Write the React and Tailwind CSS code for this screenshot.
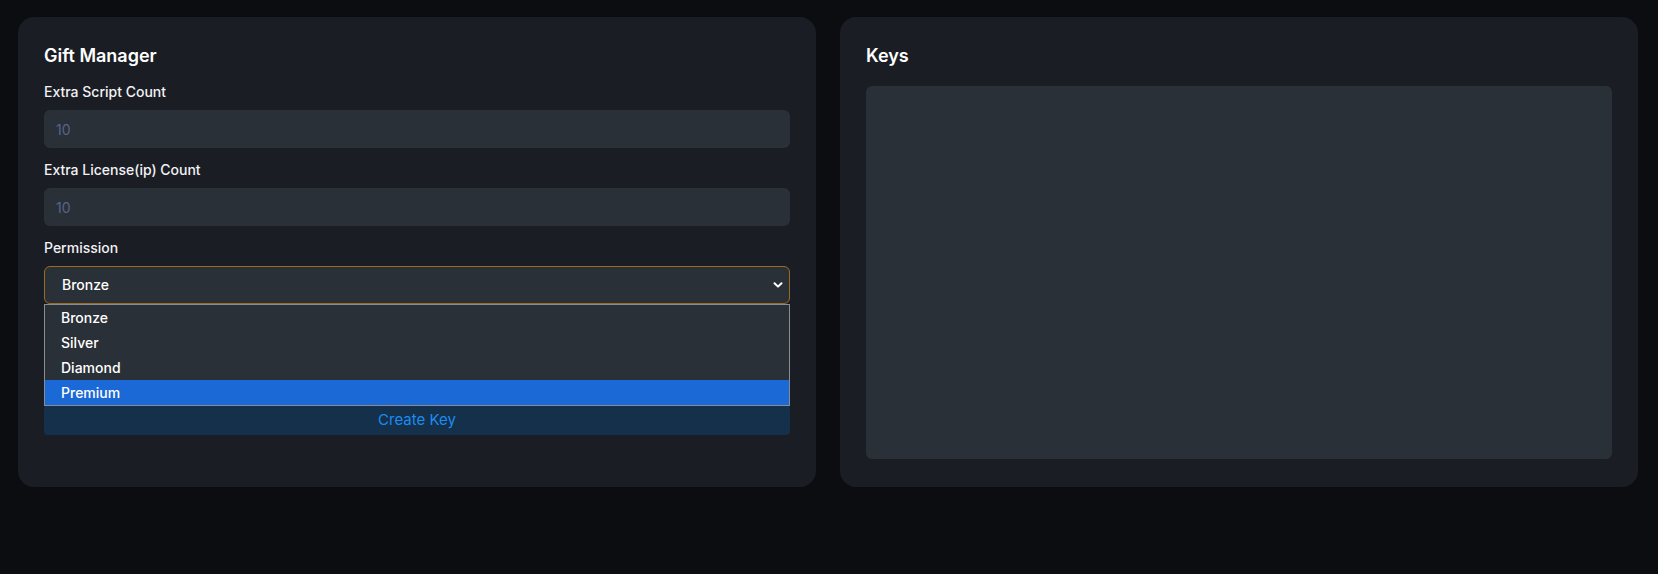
import { useState } from "react";

const permissions = ["Bronze", "Silver", "Diamond", "Premium"];

const Field = ({ label, value }) => (
  <div className="mt-3">
    <label className="block mb-2 text-sm leading-5 font-medium text-[#f1f2f4]">
      {label}
    </label>
    <input
      type="text"
      defaultValue={value}
      className="w-full h-[38px] px-3 rounded-md bg-[#2a3038] text-sm text-[#58638a] outline-none"
    />
  </div>
);

const App = () => {
  const [permission] = useState("Bronze");

  return (
    <div
      className="min-h-screen bg-[#0c0d10] pt-[17px] pl-[18px] pr-[20px]"
      style={{ fontFamily: "Inter, 'Noto Sans', sans-serif" }}
    >
      <div className="grid grid-cols-2 gap-6">
        {/* Gift Manager */}
        <div className="bg-[#1b1d24] rounded-2xl px-[26px] pt-[25px] pb-[52px]">
          <h2 className="text-lg leading-7 font-semibold text-white">
            Gift Manager
          </h2>

          <Field label="Extra Script Count" value="10" />
          <Field label="Extra License(ip) Count" value="10" />

          <div className="mt-3">
            <label className="block mb-2 text-sm leading-5 font-medium text-[#f1f2f4]">
              Permission
            </label>
            <div className="relative">
              <div className="flex items-center justify-between h-[38px] pl-[17px] pr-[4px] rounded-md border border-[#9c6a22] bg-[#2a3038] text-sm font-medium text-white">
                <span>{permission}</span>
                <svg
                  width="12"
                  height="12"
                  viewBox="0 0 12 12"
                  className="mr-[1px]"
                >
                  <path
                    d="M2.5 4.2 L6 7.6 L9.5 4.2"
                    fill="none"
                    stroke="white"
                    strokeWidth="2"
                    strokeLinecap="round"
                    strokeLinejoin="round"
                  />
                </svg>
              </div>

              {/* open dropdown list */}
              <ul className="absolute left-0 right-0 top-full z-10 border border-[#8a8c90] bg-[#2a3038] text-sm font-medium text-white">
                {permissions.map((p, i) => (
                  <li
                    key={p}
                    className={`h-[25px] leading-[25px] pl-[16px] ${
                      i === permissions.length - 1 ? "bg-[#1b69d6]" : ""
                    }`}
                  >
                    {p}
                  </li>
                ))}
              </ul>
            </div>
          </div>

          <button className="mt-[101px] w-full h-[30px] rounded-[4px] bg-[#14304a] text-[15px] text-[#1c8cf0]">
            Create Key
          </button>
        </div>

        {/* Keys */}
        <div className="flex flex-col bg-[#1b1d24] rounded-2xl px-[26px] pt-[25px] pb-[28px]">
          <h2 className="mb-4 text-lg leading-7 font-semibold text-white">
            Keys
          </h2>
          <div className="flex-1 rounded-md bg-[#2a3038]"></div>
        </div>
      </div>
    </div>
  );
};

export default App;
